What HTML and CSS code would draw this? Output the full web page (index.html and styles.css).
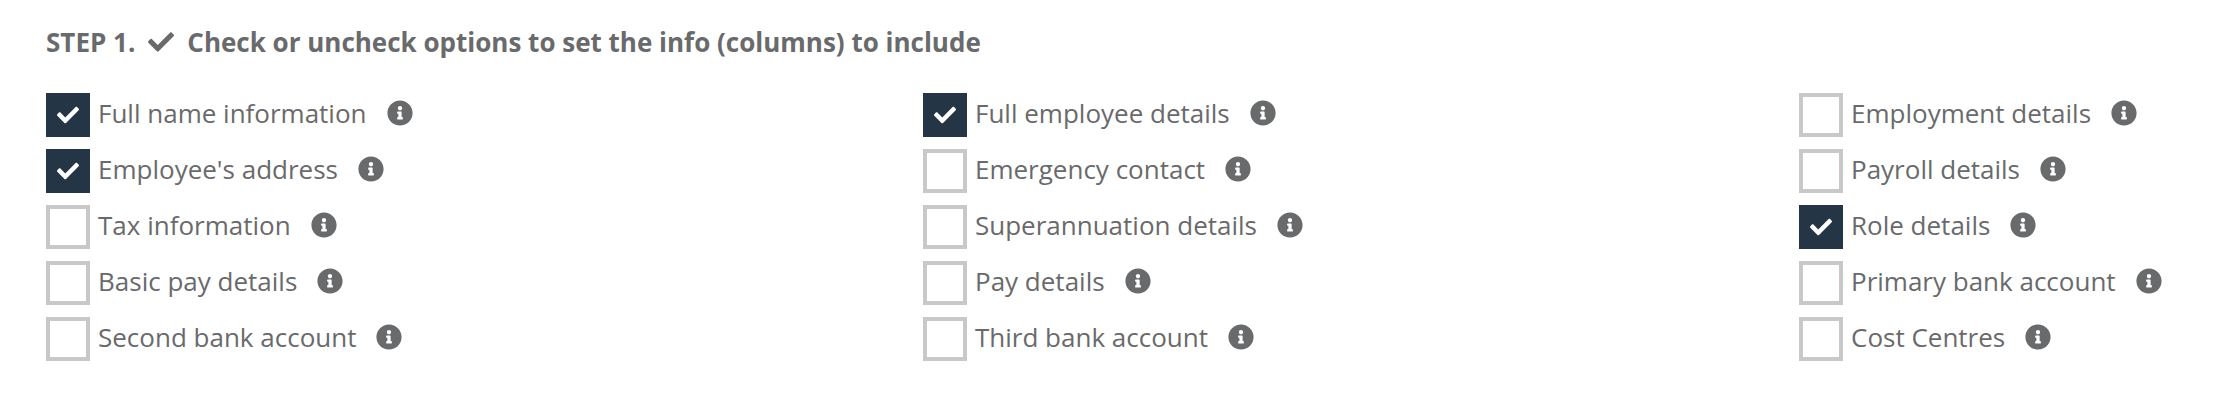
FILE: index.html
```
<!DOCTYPE html>
<html lang="en">
<head>
<meta charset="utf-8">
<title>Report columns</title>
<link rel="stylesheet" href="styles.css">
</head>
<body>
<svg class="sprite" aria-hidden="true">
  <symbol id="check" viewBox="0 0 512 512"><path d="M173.898 439.404l-166.4-166.4c-9.997-9.997-9.997-26.206 0-36.204l36.203-36.204c9.997-9.998 26.207-9.998 36.204 0L192 312.69 432.095 72.596c9.997-9.997 26.207-9.997 36.204 0l36.203 36.204c9.997 9.997 9.997 26.206 0 36.204l-294.4 294.401c-9.998 9.997-26.207 9.997-36.204-.001z"/></symbol>
  <symbol id="info" viewBox="0 0 512 512"><path d="M256 8C119.043 8 8 119.083 8 256c0 136.997 111.043 248 248 248s248-111.003 248-248C504 119.083 392.957 8 256 8zm0 110c23.196 0 42 18.804 42 42s-18.804 42-42 42-42-18.804-42-42 18.804-42 42-42zm56 254c0 6.627-5.373 12-12 12h-88c-6.627 0-12-5.373-12-12v-24c0-6.627 5.373-12 12-12h12v-64h-12c-6.627 0-12-5.373-12-12v-24c0-6.627 5.373-12 12-12h64c6.627 0 12 5.373 12 12v100h12c6.627 0 12 5.373 12 12v24z"/></symbol>
</svg>
<main class="step">
  <h2 class="title"><span>STEP 1.</span><svg class="title-icon"><use href="#check"/></svg><span>Check or uncheck options to set the info (columns) to include</span></h2>
  <div class="options">
    <div class="option"><span class="box checked"><svg class="tick"><use href="#check"/></svg></span><span class="label">Full name information</span><svg class="info"><use href="#info"/></svg></div>
    <div class="option"><span class="box checked"><svg class="tick"><use href="#check"/></svg></span><span class="label">Full employee details</span><svg class="info"><use href="#info"/></svg></div>
    <div class="option"><span class="box"></span><span class="label">Employment details</span><svg class="info"><use href="#info"/></svg></div>
    <div class="option"><span class="box checked"><svg class="tick"><use href="#check"/></svg></span><span class="label">Employee's address</span><svg class="info"><use href="#info"/></svg></div>
    <div class="option"><span class="box"></span><span class="label">Emergency contact</span><svg class="info"><use href="#info"/></svg></div>
    <div class="option"><span class="box"></span><span class="label">Payroll details</span><svg class="info"><use href="#info"/></svg></div>
    <div class="option"><span class="box"></span><span class="label">Tax information</span><svg class="info"><use href="#info"/></svg></div>
    <div class="option"><span class="box"></span><span class="label">Superannuation details</span><svg class="info"><use href="#info"/></svg></div>
    <div class="option"><span class="box checked"><svg class="tick"><use href="#check"/></svg></span><span class="label">Role details</span><svg class="info"><use href="#info"/></svg></div>
    <div class="option"><span class="box"></span><span class="label">Basic pay details</span><svg class="info"><use href="#info"/></svg></div>
    <div class="option"><span class="box"></span><span class="label">Pay details</span><svg class="info"><use href="#info"/></svg></div>
    <div class="option"><span class="box"></span><span class="label">Primary bank account</span><svg class="info"><use href="#info"/></svg></div>
    <div class="option"><span class="box"></span><span class="label">Second bank account</span><svg class="info"><use href="#info"/></svg></div>
    <div class="option"><span class="box"></span><span class="label">Third bank account</span><svg class="info"><use href="#info"/></svg></div>
    <div class="option"><span class="box"></span><span class="label">Cost Centres</span><svg class="info"><use href="#info"/></svg></div>
  </div>
</main>
</body>
</html>
```
FILE: styles.css
```
body {
  margin: 0;
  background: #fff;
  color: #696a6c;
  font: 26px/36px "Open Sans", "Noto Sans", sans-serif;
}

svg {
  display: block;
  flex: none;
  fill: currentColor;
}

.sprite {
  display: none;
}

.step {
  padding: 24px 0 0 46px;
}

.title {
  display: flex;
  align-items: center;
  margin: 0 0 33px;
  font-size: 26px;
  font-weight: 700;
  white-space: nowrap;
}

.title-icon {
  width: 26px;
  height: 26px;
  margin: 0 13px;
}

.options {
  display: grid;
  grid-template-columns: 877px 876px 1fr;
  row-gap: 12px;
}

.option {
  display: flex;
  height: 44px;
  white-space: nowrap;
}

.box {
  box-sizing: border-box;
  display: flex;
  align-items: center;
  justify-content: center;
  width: 44px;
  height: 44px;
  border: 4px solid #c8c8c8;
}

.checked {
  border-color: #243546;
  background: #243546;
  color: #fff;
}

.tick {
  width: 22px;
  height: 22px;
}

.label {
  margin-left: 8px;
  padding-top: 2px;
}

.info {
  width: 26px;
  height: 26px;
  margin: 7px 0 0 20px;
}
```
